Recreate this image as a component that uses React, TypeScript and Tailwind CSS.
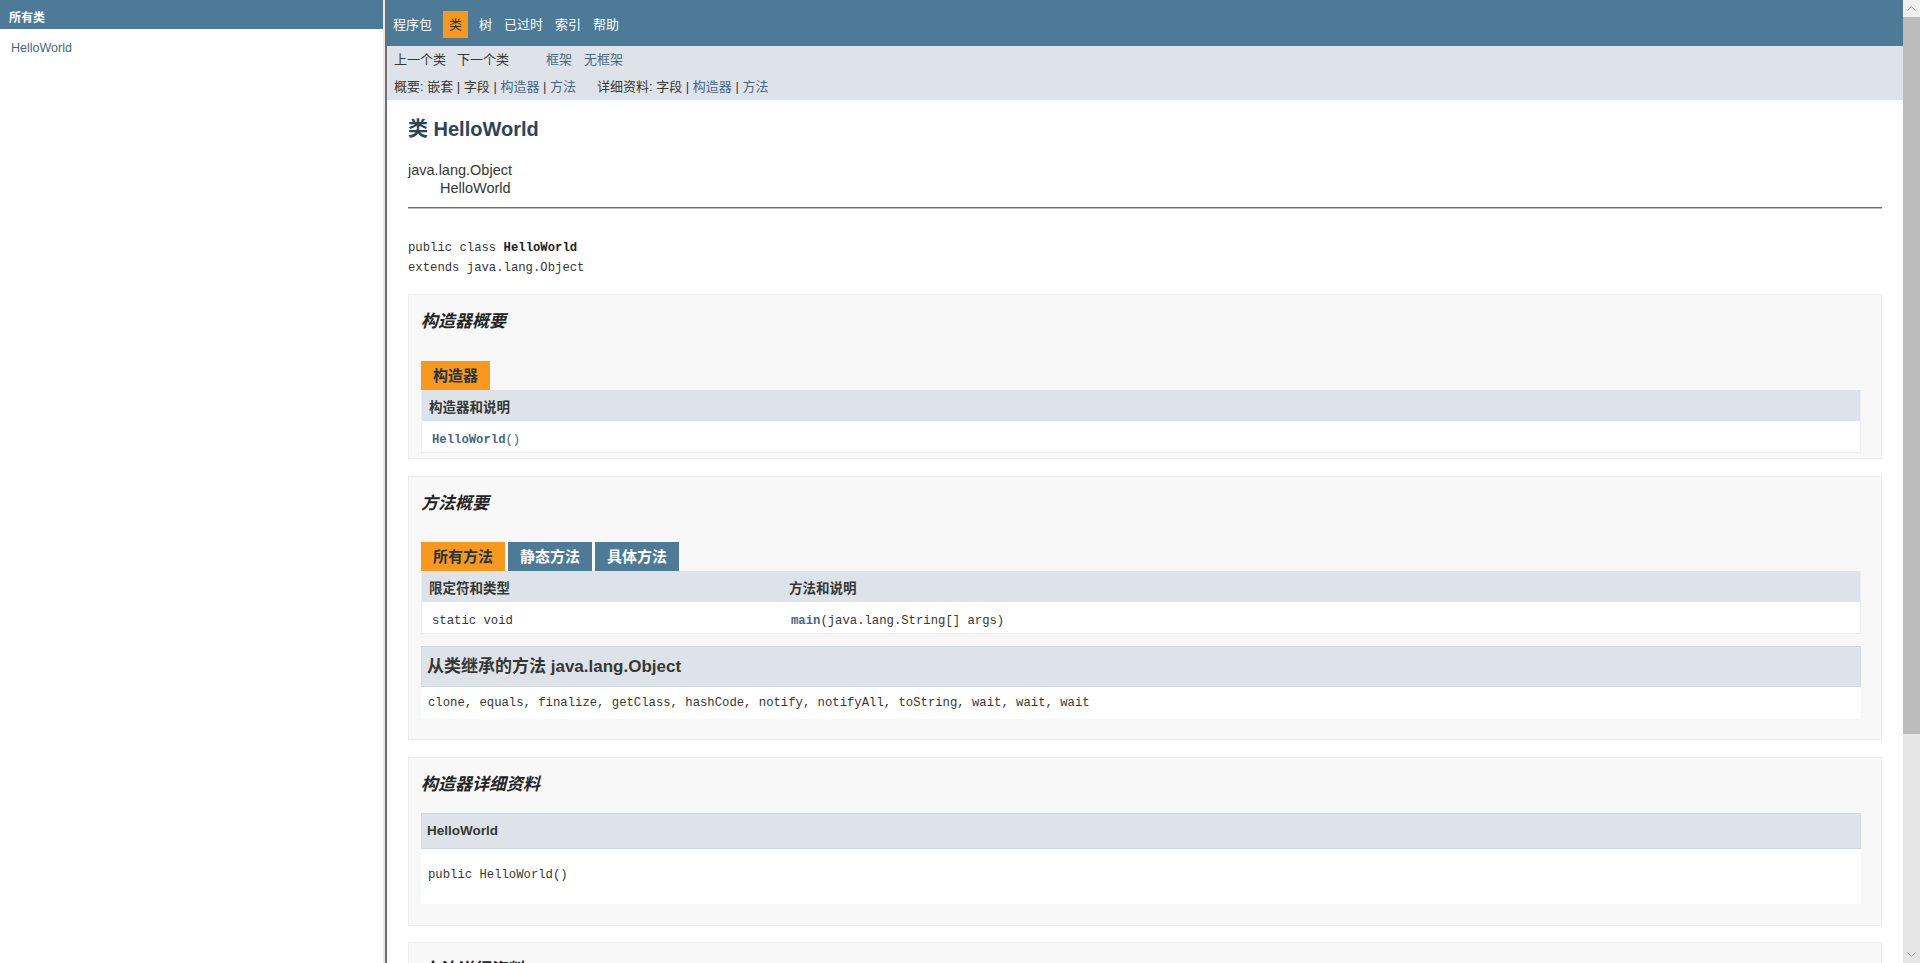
import React from "react";

const SANS = "font-['Liberation_Sans','Noto_Sans_CJK_SC',sans-serif]";
const MONO = "font-['Liberation_Mono','Noto_Sans_CJK_SC',monospace]";

function Chevron({ up }: { up: boolean }) {
  return (
    <svg width="9" height="5" viewBox="0 0 9 5">
      <path
        d={up ? "M0.5 4.5 L4.5 0.5 L8.5 4.5" : "M0.5 0.5 L4.5 4.5 L8.5 0.5"}
        fill="none"
        stroke="#a3a3a3"
        strokeWidth="1"
      />
    </svg>
  );
}

function Link({ children }: { children: React.ReactNode }) {
  return <span className="text-[#4a6782]">{children}</span>;
}

export default function App() {
  return (
    <div className={`flex h-[963px] w-[1920px] overflow-hidden bg-white text-[#353833] ${SANS}`}>
      {/* left frame */}
      <div className="flex w-[383px] shrink-0 flex-col">
        <div className="h-[29px] bg-[#4d7a97] pl-[9px] pt-[10px] text-[12px] font-bold leading-[16px] text-white">
          所有类
        </div>
        <div className="pl-[11px] pt-[11px] text-[12.5px] leading-[16px] text-[#4a6782]">HelloWorld</div>
      </div>
      <div className="w-[2px] shrink-0 bg-[#ebebeb]" />
      <div className="w-[2px] shrink-0 bg-[#6f6f6f]" />

      {/* right frame */}
      <div className="flex min-w-0 flex-1">
        <div className="flex min-w-0 flex-1 flex-col">
          {/* top nav */}
          <div className="flex h-[46px] shrink-0 items-start bg-[#4d7a97] pt-[11px] text-[13px] leading-[27px] text-white">
            <span className="px-[6px]">程序包</span>
            <span className="mx-[5px] bg-[#f8981d] px-[6px] text-[#253441]">类</span>
            <span className="px-[6px]">树</span>
            <span className="px-[6px]">已过时</span>
            <span className="px-[6px]">索引</span>
            <span className="px-[6px]">帮助</span>
          </div>

          {/* sub nav */}
          <div className="h-[54px] shrink-0 bg-[#dee3e9] pl-[7px] text-[13px] leading-[18px]">
            <div className="flex h-[27px] pt-[5px]">
              <span>上一个类</span>
              <span className="ml-[11px]">下一个类</span>
              <span className="ml-[37px] text-[#4a6782]">框架</span>
              <span className="ml-[12px] text-[#4a6782]">无框架</span>
            </div>
            <div className="flex h-[27px] pt-[5px] whitespace-pre">
              <span className="w-[203px] shrink-0">
                概要: 嵌套 | 字段 | <Link>构造器</Link> | <Link>方法</Link>
              </span>
              <span>
                详细资料: 字段 | <Link>构造器</Link> | <Link>方法</Link>
              </span>
            </div>
          </div>

          {/* main content */}
          <div className="flex-1 pl-[21px] pr-[21px]">
            <h2 className="mt-[17px] text-[20px] font-bold leading-[24px] text-[#2c4557]">类 HelloWorld</h2>
            <div className="mt-[20px] text-[14.5px] leading-[18px]">java.lang.Object</div>
            <div className="pl-[32px] text-[14.5px] leading-[18px]">HelloWorld</div>
            <div className="mt-[10px] h-[1px] bg-[#6e6e6e]" />
            <div className="h-[1px] bg-[#bdbdbd]" />
            <div className={`mt-[29px] text-[12.25px] leading-[20px] ${MONO}`}>
              public class <b className="text-[#222]">HelloWorld</b>
            </div>
            <div className={`text-[12.25px] leading-[20px] ${MONO}`}>extends java.lang.Object</div>

            {/* 构造器概要 */}
            <div className="mt-[16px] border border-[#ededed] bg-[#f8f8f8] pb-[5px] pl-[12px] pr-[20px] pt-[17px]">
              <h3 className="text-[17px] font-bold italic leading-[20px] text-[#252525]">构造器概要</h3>
              <div className="mt-[29px] flex">
                <span className="h-[29px] bg-[#f8981d] px-[12px] text-[15px] font-bold leading-[29px] text-[#253441]">
                  构造器
                </span>
              </div>
              <div className="border-x border-b border-[#eeeeee]">
                <div className="h-[31px] bg-[#dee3e9] pl-[7px] pt-[9px] text-[13.5px] font-bold leading-[18px]">
                  构造器和说明
                </div>
                <div className={`h-[31px] bg-white pl-[10px] pt-[10px] text-[12.25px] leading-[18px] ${MONO}`}>
                  <b className="text-[#4a6782]">HelloWorld</b>
                  <span className="text-[#4a6782]">()</span>
                </div>
              </div>
            </div>

            {/* 方法概要 */}
            <div className="mt-[17px] border border-[#ededed] bg-[#f8f8f8] pb-[20px] pl-[12px] pr-[20px] pt-[17px]">
              <h3 className="text-[17px] font-bold italic leading-[20px] text-[#252525]">方法概要</h3>
              <div className="mt-[28px] flex gap-[3px]">
                <span className="h-[29px] bg-[#f8981d] px-[12px] text-[15px] font-bold leading-[29px] text-[#253441]">
                  所有方法
                </span>
                <span className="h-[29px] bg-[#4d7a97] px-[12px] text-[15px] font-bold leading-[29px] text-white">
                  静态方法
                </span>
                <span className="h-[29px] bg-[#4d7a97] px-[12px] text-[15px] font-bold leading-[29px] text-white">
                  具体方法
                </span>
              </div>
              <div className="border-x border-b border-[#eeeeee]">
                <div className="flex h-[31px] bg-[#dee3e9] pt-[9px] text-[13.5px] font-bold leading-[18px]">
                  <span className="w-[359px] shrink-0 pl-[7px]">限定符和类型</span>
                  <span className="pl-[8px]">方法和说明</span>
                </div>
                <div className={`flex h-[31px] bg-white pt-[10px] text-[12.25px] leading-[18px] ${MONO}`}>
                  <span className="w-[359px] shrink-0 pl-[10px]">static void</span>
                  <span className="pl-[10px]">
                    <b className="text-[#4a6782]">main</b>(java.lang.String[] args)
                  </span>
                </div>
              </div>
              <div className="mt-[12px] flex h-[41px] items-center border border-[#d0d9e0] bg-[#dee3e9] pl-[5px] text-[17px] font-bold">
                从类继承的方法 java.lang.Object
              </div>
              <div className={`h-[32px] bg-white pl-[7px] text-[12.25px] leading-[32px] ${MONO}`}>
                clone, equals, finalize, getClass, hashCode, notify, notifyAll, toString, wait, wait, wait
              </div>
            </div>

            {/* 构造器详细资料 */}
            <div className="mt-[17px] border border-[#ededed] bg-[#f8f8f8] pb-[21px] pl-[12px] pr-[20px] pt-[17px]">
              <h3 className="text-[17px] font-bold italic leading-[20px] text-[#252525]">构造器详细资料</h3>
              <div className="mt-[18px] flex h-[36px] items-center border border-[#d0d9e0] bg-[#dee3e9] pl-[5px] text-[13.5px] font-bold">
                HelloWorld
              </div>
              <div className={`h-[55px] bg-white pl-[7px] pt-[16px] text-[12.25px] leading-[20px] ${MONO}`}>
                public HelloWorld()
              </div>
            </div>

            {/* 方法详细资料 */}
            <div className="mt-[16px] border border-[#ededed] bg-[#f8f8f8] pb-[21px] pl-[12px] pr-[20px] pt-[17px]">
              <h3 className="text-[17px] font-bold italic leading-[20px] text-[#252525]">方法详细资料</h3>
              <div className="mt-[18px] h-[36px] border border-[#d0d9e0] bg-[#dee3e9]" />
            </div>
          </div>
        </div>

        {/* scrollbar */}
        <div className="flex w-[17px] shrink-0 flex-col bg-[#e6e6e6]">
          <div className="flex h-[17px] items-center justify-center bg-[#f0f0f0]">
            <Chevron up={true} />
          </div>
          <div className="h-[717px] bg-[#bcbcbc]" />
          <div className="flex-1" />
          <div className="flex h-[17px] items-center justify-center">
            <Chevron up={false} />
          </div>
        </div>
      </div>
    </div>
  );
}
